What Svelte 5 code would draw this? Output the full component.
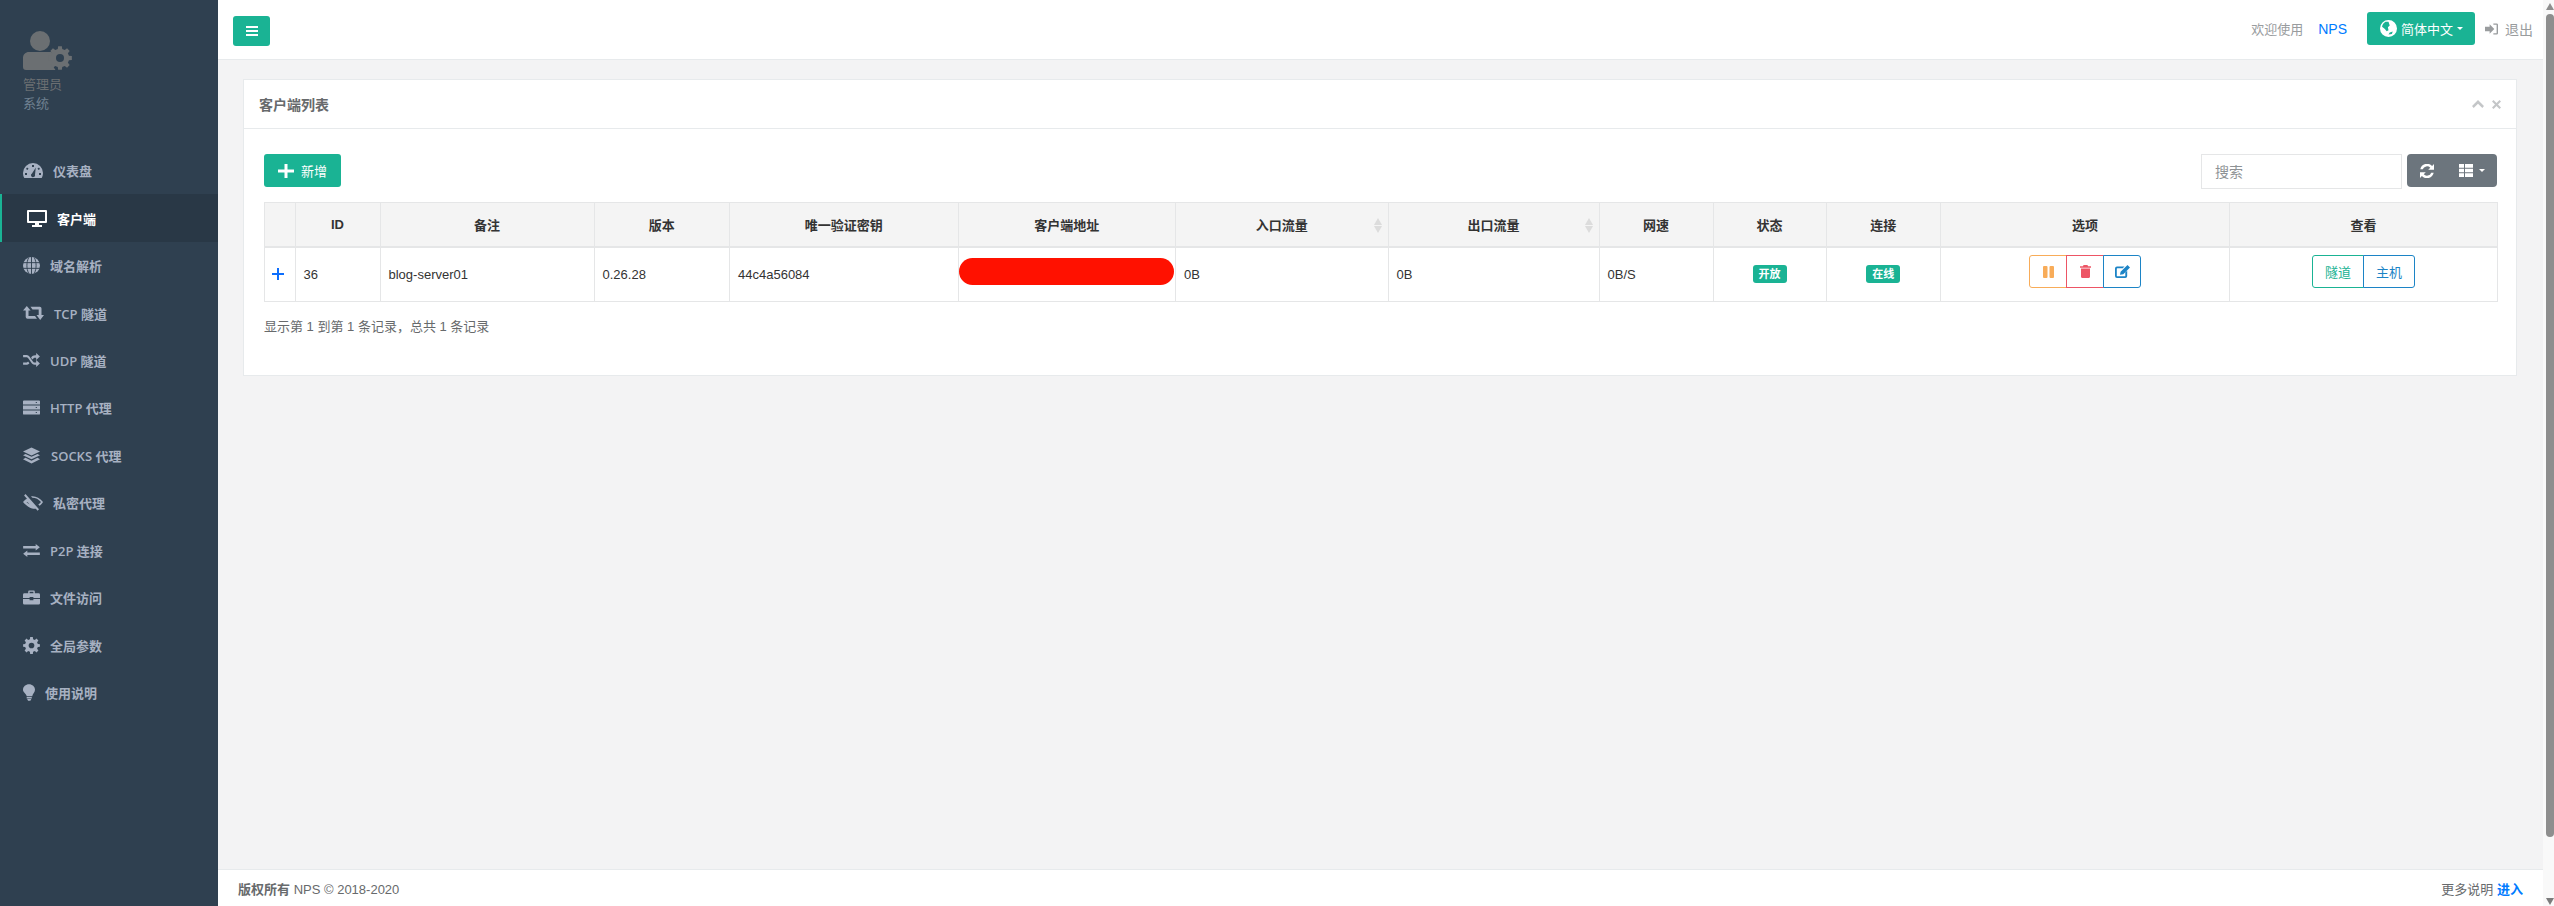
<script>
  const menu = [
    { label: '仪表盘', icon: 'dash' },
    { label: '客户端', icon: 'desk', active: true },
    { label: '域名解析', icon: 'globe' },
    { label: 'TCP 隧道', icon: 'retweet' },
    { label: 'UDP 隧道', icon: 'random' },
    { label: 'HTTP 代理', icon: 'server' },
    { label: 'SOCKS 代理', icon: 'layers', wide: true },
    { label: '私密代理', icon: 'eye' },
    { label: 'P2P 连接', icon: 'exchange' },
    { label: '文件访问', icon: 'case' },
    { label: '全局参数', icon: 'cog' },
    { label: '使用说明', icon: 'bulb' }
  ];

  function gearPath(teeth, outer, root) {
    const c = 12;
    const step = (Math.PI * 2) / teeth;
    const pts = [];
    for (let i = 0; i < teeth; i++) {
      const a = i * step - Math.PI / 2;
      const o = step * 0.2;
      const b = step * 0.31;
      for (const [ang, r] of [[a - b, root], [a - o, outer], [a + o, outer], [a + b, root]]) {
        pts.push((c + Math.cos(ang) * r).toFixed(2) + ' ' + (c + Math.sin(ang) * r).toFixed(2));
      }
    }
    return 'M' + pts.join('L') + 'z';
  }
  const gear = gearPath(8, 12, 9.2);
</script>

{#snippet icon(name)}
  {#if name === 'dash'}
    <svg class="ico i-dash" viewBox="0 0 20 15"><path fill-rule="evenodd" d="M10 0a10 10 0 0 1 10 10c0 1.800-.4 3.500-1.300 5H1.300A10 10 0 0 1 0 10 10 10 0 0 1 10 0zM9 2v2h2V2zM4 4.500 3 6l1.500 1 1-1.500zm12 0-1.500 1 1 1.500L17 6zM2 10v2h2v-2zm14 0v2h2v-2zM12.800 4.500 9 10.500a2 2 0 1 0 3 1.300z"/></svg>
  {:else if name === 'desk'}
    <svg class="ico i-desk" viewBox="0 0 20 17"><path fill-rule="evenodd" d="M1 0h18a1 1 0 0 1 1 1v11a1 1 0 0 1-1 1h-7v2h3v2H5v-2h3v-2H1a1 1 0 0 1-1-1V1a1 1 0 0 1 1-1zm1 2v9h16V2z"/></svg>
  {:else if name === 'globe'}
    <svg class="ico i-globe" viewBox="0 0 18 18"><circle cx="9" cy="9" r="9"/><path d="M0 6h18M0 12h18M9 0v18M6 .5C3.500 6 3.500 12 6 17.500M12 .5c2.500 5.500 2.500 11.500 0 17" stroke="#2f4050" stroke-width="1" fill="none"/></svg>
  {:else if name === 'retweet'}
    <svg class="ico i-ret" viewBox="0 0 21 14"><path d="M3.800 0 7.600 4.500H5.500V10H12l2 2.700H4.500A1.800 1.800 0 0 1 2.700 11V4.500H0zM7.500.8h9.300A1.800 1.800 0 0 1 18.500 2.600V9H21l-3.800 5-3.700-5h2.200V3.500H9.500z"/></svg>
  {:else if name === 'random'}
    <svg class="ico i-rand" viewBox="0 0 18 15"><path d="M0 2.200h3.500c2 0 3 1 4 2.500l3 4.300c.7 1 1.200 1.200 2.300 1.200H14V7.500l4 3.700-4 3.800v-2.500h-1.500c-2 0-3-1-4-2.500l-3-4.300c-.7-1-1.200-1.200-2.300-1.200H0zM14 0l4 3.700-4 3.800V5h-1c-1.400 0-2 .6-3 2L8.500 5C9.800 3.200 11 2.500 13 2.500h1zM0 10.200h3c1.100 0 1.700-.4 2.300-1.200l1.500 1.900c-1 1.200-2.100 1.800-3.800 1.800H0z"/></svg>
  {:else if name === 'server'}
    <svg class="ico i-serv" viewBox="0 0 18 15"><path fill-rule="evenodd" d="M1 0h16a1 1 0 0 1 1 1v3.300H0V1a1 1 0 0 1 1-1zm12.500 1.600v1.200h1.200V1.600zM0 5.400h18v4.200H0zm13.500 1.500v1.200h1.200V6.900zM0 10.700h18V14a1 1 0 0 1-1 1H1a1 1 0 0 1-1-1zm13.500 1.500v1.200h1.200v-1.200z"/></svg>
  {:else if name === 'layers'}
    <svg class="ico i-lay" viewBox="0 0 18 17"><path d="M9 0l9 4.200-9 4.300L0 4.200zM2.700 6.800 9 9.800l6.300-3L18 8.200l-9 4.300-9-4.300zM2.700 11 9 14l6.300-3 2.700 1.400-9 4.600-9-4.600z"/></svg>
  {:else if name === 'eye'}
    <svg class="ico i-eye" viewBox="0 0 20 17"><path d="M2.500 0l13.500 15.300-1.400 1.500L1.100 1.500zM4.800 4.300 14 14.600c-4 1-9-.8-14-6.600 1.300-1.600 2.900-2.800 4.800-3.700zM3.400 8c1 1 2 1.800 3.200 2.400L4.700 8.300zM8 2.500c4.500-.7 8.500 1.500 12 5.500-.7 1.200-2 2.700-3.500 3.800l-1.200-1.400c1.200-.7 2.100-1.600 2.700-2.400-2.500-2.700-5.200-4.200-8.600-4.200z"/></svg>
  {:else if name === 'exchange'}
    <svg class="ico i-exc" viewBox="0 0 18 14"><path d="M13.500 0 18 3.500 13.500 7V4.900H0V2.100h13.500zM4.500 7v2.100H18v2.800H4.500V14L0 10.500z"/></svg>
  {:else if name === 'case'}
    <svg class="ico i-case" viewBox="0 0 18 15"><path fill-rule="evenodd" d="M5.500 3V1.300C5.500.6 6 0 6.800 0h4.400c.8 0 1.300.6 1.300 1.300V3h4A1.500 1.500 0 0 1 18 4.500V8h-7V7H7v1H0V4.500A1.500 1.500 0 0 1 1.500 3zM7 1.500V3h4V1.500zM0 9h7v1.500h4V9h7v4.500a1.500 1.500 0 0 1-1.500 1.500h-15A1.500 1.500 0 0 1 0 13.500z"/></svg>
  {:else if name === 'cog'}
    <svg class="ico i-cog" viewBox="0 0 24 24"><path d={gear}/><circle cx="12" cy="12" r="4" fill="#2f4050"/></svg>
  {:else if name === 'bulb'}
    <svg class="ico i-bulb" viewBox="0 0 13 18"><path d="M6.500 0C10 0 13 2.600 13 6c0 3-2.500 4.300-3 7H4C3.500 10.300 0 9 0 6 0 2.600 3 0 6.500 0zM4 14h5.500v1.500H4zM4.500 16h4.500l-1 2H5.500z"/></svg>
  {/if}
{/snippet}

<div class="page">
  <nav class="side">
    <div class="profile">
      <svg class="avatar" viewBox="0 0 49 39">
        <circle cx="17" cy="10" r="10"/>
        <path d="M6 21h20c2.500 0 4.500.6 6 2-3.800 5-3.500 11 .5 16H3a3 3 0 0 1-3-3v-9c0-3.500 2.500-6 6-6z"/>
        <g transform="translate(25 15)"><path d={gear}/><circle cx="12" cy="12" r="4" fill="#2f4050"/></g>
      </svg>
      <div class="role">管理员</div>
      <div class="sys">系统</div>
    </div>
    <ul>
      {#each menu as m}
        <li class:active={m.active} class:wide={m.wide}>
          {@render icon(m.icon)}
          <span>{m.label}</span>
        </li>
      {/each}
    </ul>
  </nav>

  <div class="main">
    <header class="top">
      <button class="btn green burger" aria-label="菜单">
        <svg viewBox="0 0 12 10" width="12" height="10"><path d="M0 0h12v2H0zM0 4h12v2H0zM0 8h12v2H0z" fill="#fff"/></svg>
      </button>
      <div class="top-right">
        <span class="welcome">欢迎使用</span>
        <a class="nps" href="#nps">NPS</a>
        <button class="btn green lang">
          <svg viewBox="0 0 14 14" width="17" height="17"><path fill-rule="evenodd" fill="#fff" d="M7 0a7 7 0 1 1 0 14A7 7 0 0 1 7 0zM4.500 1.500C3 2.300 2 3.800 1.700 5.500L4 7.500l1.500 1.800L7 8.500l-.5-2.500L8 4.500 7 1.500zM10.500 9.500l-2.500.8-1 1.700 2.800-.5z"/></svg>
          <span>简体中文</span><i class="caret"></i>
        </button>
        <span class="logout">
          <svg viewBox="0 0 14 12" width="13" height="12"><path d="M0 3.500h5V1l5 5-5 5V8.500H0zM9 0h3.500A1.500 1.500 0 0 1 14 1.500v9a1.500 1.500 0 0 1-1.500 1.500H9v-1.500h3.500v-9H9z" fill="#999c9e"/></svg>
          退出
        </span>
      </div>
    </header>

    <main class="content">
      <section class="card">
        <div class="card-head">
          <h5>客户端列表</h5>
          <div class="tools">
            <svg viewBox="0 0 12 8" width="12" height="8"><path d="M6 0 12 6 10.300 8 6 3.700 1.700 8 0 6z" fill="#c4c6c8"/></svg>
            <svg viewBox="0 0 9 9" width="9" height="9"><path d="M1.500 0 4.500 3 7.500 0 9 1.500 6 4.500 9 7.500 7.500 9 4.500 6 1.500 9 0 7.500 3 4.500 0 1.500z" fill="#c4c6c8"/></svg>
          </div>
        </div>
        <div class="card-body">
          <div class="toolbar">
            <button class="btn green add">
              <svg viewBox="0 0 16 14" width="16" height="14"><path d="M6.500 0h3v5.500H16v3H9.500V14h-3V8.500H0v-3h6.500z" fill="#fff"/></svg>
              新增
            </button>
            <div class="search-wrap">
              <input class="search" placeholder="搜索" />
              <div class="tool-group">
                <svg viewBox="0 0 14 14" width="14" height="14"><path d="M14 0v5.800H8.200l2.100-2.100A4.500 4.500 0 0 0 2.800 5.300H.3a7 7 0 0 1 11.800-3.400zM0 14V8.200h5.800l-2.100 2.100a4.500 4.500 0 0 0 7.500-1.600h2.500a7 7 0 0 1-11.800 3.400z" fill="#fff"/></svg>
                <span class="cols">
                  <svg viewBox="0 0 14 13" width="14" height="13"><path fill="#fff" d="M0 0h5v3.800H0zM6 0h8v3.800H6zM0 4.700h5v3.600H0zM6 4.700h8v3.600H6zM0 9.200h5V13H0zM6 9.200h8V13H6z"/></svg>
                  <i class="caret"></i>
                </span>
              </div>
            </div>
          </div>

          <table>
            <thead>
              <tr>
                <th></th><th>ID</th><th>备注</th><th>版本</th><th>唯一验证密钥</th><th>客户端地址</th>
                <th class="sort">入口流量</th><th class="sort">出口流量</th>
                <th>网速</th><th>状态</th><th>连接</th><th>选项</th><th>查看</th>
              </tr>
            </thead>
            <tbody>
              <tr>
                <td class="expand"><svg viewBox="0 0 12 12" width="12" height="12"><path d="M5 0h2v5h5v2H7v5H5V7H0V5h5z" fill="#0d6efd"/></svg></td>
                <td>36</td>
                <td>blog-server01</td>
                <td>0.26.28</td>
                <td>44c4a56084</td>
                <td class="addr"><div class="mask"></div></td>
                <td>0B</td>
                <td>0B</td>
                <td>0B/S</td>
                <td class="center"><span class="badge">开放</span></td>
                <td class="center"><span class="badge">在线</span></td>
                <td class="center">
                  <div class="bgroup">
                    <button class="o-warn" aria-label="暂停"><svg viewBox="0 0 11 12" width="11" height="12"><rect x="0" y="0" width="4.500" height="12" rx="1" fill="#f8ac59"/><rect x="6.500" y="0" width="4.500" height="12" rx="1" fill="#f8ac59"/></svg></button>
                    <button class="o-danger" aria-label="删除"><svg viewBox="0 0 11 13" width="11" height="13"><path d="M3.500 0h4l.5 1.200h3v1.600H0V1.200h3zM1 3.500h9v8.300c0 .7-.5 1.200-1.200 1.200H2.200C1.500 13 1 12.500 1 11.800z" fill="#ed5565"/></svg></button>
                    <button class="o-blue" aria-label="编辑"><svg viewBox="0 0 15 13" width="15" height="13"><path d="M2 1.500h7.500L7.700 3.300H2.300a.5.500 0 0 0-.5.500v7a.5.500 0 0 0 .5.500h7.500a.5.500 0 0 0 .5-.5V7.500L12.200 5.700V11a2 2 0 0 1-2 2H2a2 2 0 0 1-2-2V3.500a2 2 0 0 1 2-2zM12.500 0 15 2.500 8.300 9.200l-3.300.6.600-3.100z" fill="#1c84c6"/></svg></button>
                  </div>
                </td>
                <td class="center">
                  <div class="bgroup text">
                    <button class="o-green">隧道</button>
                    <button class="o-blue">主机</button>
                  </div>
                </td>
              </tr>
            </tbody>
          </table>
          <p class="summary">显示第 1 到第 1 条记录，总共 1 条记录</p>
        </div>
      </section>
    </main>

    <footer class="foot">
      <div><strong>版权所有</strong> NPS © 2018-2020</div>
      <div>更多说明 <a href="#more">进入</a></div>
    </footer>
  </div>

  <div class="scrollbar" aria-hidden="true">
    <i class="up"></i>
    <div class="thumb"></div>
    <i class="down"></i>
  </div>
</div>

<style>
  :global(body) {
    margin: 0;
    font-family: "Liberation Sans", "Noto Sans CJK SC", sans-serif;
    font-size: 13px;
    color: #676a6c;
  }
  .page {
    display: flex;
    width: 2554px;
    height: 906px;
    overflow: hidden;
    background: #f3f3f4;
  }
  .side {
    width: 218px;
    flex: none;
    background: #2f4050;
    color: #a7b1c2;
    font-family: "Open Sans", "Noto Sans CJK SC", sans-serif;
    font-size: 13px;
    font-weight: 600;
  }
  .profile {
    height: 147px;
    box-sizing: border-box;
    padding: 31px 0 0 23px;
  }
  .avatar {
    display: block;
    width: 49px;
    height: 39px;
    fill: #6b6f72;
  }
  .role { color: #6b6f72; font-size: 13px; font-weight: 400; line-height: 19px; margin-top: 5px; }
  .sys { color: #708090; font-size: 13px; font-weight: 400; line-height: 19px; }
  ul { list-style: none; margin: 0; padding: 0; }
  li {
    height: 47.450px;
    box-sizing: border-box;
    display: flex;
    align-items: center;
    padding-left: 23px;
    gap: 10px;
  }
  li.wide { gap: 11px; }
  li.active {
    background: #293846;
    border-left: 2px solid #1ab394;
    color: #fff;
    padding-left: 25px;
  }
  .ico { fill: #a7b1c2; display: block; flex: none; }
  li.active .ico { fill: #fff; }
  .i-dash { width: 20px; height: 15px; }
  .i-desk { width: 20px; height: 17px; }
  .i-globe { width: 17px; height: 17px; }
  .i-ret { width: 21px; height: 14px; }
  .i-rand { width: 17px; height: 14px; }
  .i-serv { width: 17px; height: 15px; }
  .i-lay { width: 17px; height: 17px; }
  .i-eye { width: 20px; height: 17px; }
  .i-exc { width: 17px; height: 13px; }
  .i-case { width: 17px; height: 15px; }
  .i-cog { width: 17px; height: 17px; }
  .i-bulb { width: 12px; height: 17px; }

  .main {
    width: 2325px;
    flex: none;
    display: flex;
    flex-direction: column;
    height: 906px;
  }
  .top {
    height: 60px;
    box-sizing: border-box;
    flex: none;
    background: #fff;
    border-bottom: 1px solid #e7eaec;
    display: flex;
    align-items: flex-start;
    justify-content: space-between;
    padding: 16px 10px 0 15px;
  }
  .btn {
    border: 0;
    border-radius: 3px;
    font: inherit;
    color: #fff;
    padding: 0;
    display: inline-flex;
    align-items: center;
    justify-content: center;
  }
  .green { background: #1ab394; }
  .burger { width: 37px; height: 30px; }
  .top-right {
    display: flex;
    align-items: center;
    margin-top: -4px;
    height: 33px;
    font-size: 13px;
    color: #999c9e;
  }
  .welcome { margin-right: 15px; }
  .nps { color: #007bff; text-decoration: none; font-size: 14px; margin-right: 20px; }
  .lang { width: 108px; height: 33px; gap: 4px; font-size: 13px; justify-content: flex-start; padding-left: 13px; box-sizing: border-box; }
  .caret {
    display: inline-block;
    border-top: 3px solid #fff;
    border-left: 3px solid transparent;
    border-right: 3px solid transparent;
  }
  .logout {
    display: inline-flex;
    align-items: center;
    gap: 7px;
    margin-left: 10px;
    font-size: 14px;
    color: #999c9e;
  }

  .content {
    flex: 1;
    padding: 19px 26px 0 25px;
  }
  .card {
    background: #fff;
    border: 1px solid #e7eaec;
    height: 297px;
    box-sizing: border-box;
  }
  .card-head {
    height: 49px;
    box-sizing: border-box;
    border-bottom: 1px solid #e7eaec;
    display: flex;
    justify-content: space-between;
    align-items: center;
    padding: 0 15px;
  }
  h5 { margin: 0; font-size: 14px; font-weight: 600; color: #676a6c; }
  .tools { display: flex; align-items: center; gap: 8px; }
  .card-body { padding: 25px 19px 0 20px; }
  .toolbar {
    display: flex;
    justify-content: space-between;
    align-items: flex-start;
  }
  .add { width: 77px; height: 33px; gap: 7px; font-size: 13px; }
  .search-wrap { display: flex; gap: 5px; }
  .search {
    width: 199px;
    height: 33px;
    box-sizing: content-box;
    border: 1px solid #e5e6e7;
    padding: 0 0 0 13px;
    width: 186px;
    font: 14px "Liberation Sans", "Noto Sans CJK SC", sans-serif;
    outline: none;
    color: #333;
  }
  .search::placeholder { color: #8e9295; }
  .tool-group {
    width: 90px;
    height: 33px;
    background: #6c757d;
    border-radius: 4px;
    display: flex;
    align-items: center;
    padding-left: 13px;
    box-sizing: border-box;
    gap: 25px;
  }
  .cols { display: inline-flex; align-items: center; gap: 6px; }

  table {
    border-collapse: collapse;
    table-layout: fixed;
    width: 2233px;
    margin-top: 13px;
    font-size: 13px;
    color: #333;
  }
  th, td { border: 1px solid #e5e6e7; padding: 0; box-sizing: border-box; }
  thead tr { height: 44px; }
  tbody tr { height: 55px; }
  th {
    background: #f4f4f4;
    color: #333;
    font-weight: 700;
    text-align: center;
    border-bottom-width: 2px;
    position: relative;
    font-size: 13px;
  }
  td { padding-left: 8px; color: #333; }
  th:nth-child(1) { width: 30.500px; }
  th:nth-child(2) { width: 85px; }
  th:nth-child(3) { width: 214px; }
  th:nth-child(4) { width: 135.500px; }
  th:nth-child(5) { width: 228.500px; }
  th:nth-child(6) { width: 217.500px; }
  th:nth-child(7) { width: 212.500px; }
  th:nth-child(8) { width: 211px; }
  th:nth-child(9) { width: 114px; }
  th:nth-child(10) { width: 113px; }
  th:nth-child(11) { width: 114.500px; }
  th:nth-child(12) { width: 289px; }
  th:nth-child(13) { width: 268px; }
  .sort::after {
    content: "";
    position: absolute;
    right: 6px;
    top: 15px;
    width: 0;
    border-left: 4px solid transparent;
    border-right: 4px solid transparent;
    border-bottom: 7px solid #dcdcdc;
  }
  .sort::before {
    content: "";
    position: absolute;
    right: 6px;
    top: 23px;
    width: 0;
    border-left: 4px solid transparent;
    border-right: 4px solid transparent;
    border-top: 7px solid #dcdcdc;
  }
  td.expand { padding: 0 0 0 7px; }
  td.expand svg { display: block; }
  td.addr { padding: 0; }
  .mask {
    height: 27px;
    margin-right: 1px;
    background: #ff1100;
    border-radius: 14px;
    margin-bottom: 6px;
  }
  td.center { padding: 0; text-align: center; }
  .badge {
    display: inline-block;
    background: #1ab394;
    color: #fff;
    font-size: 11px;
    font-weight: 700;
    line-height: 18px;
    height: 18px;
    padding: 0 6px;
    border-radius: 3px;
    vertical-align: middle;
  }
  .bgroup { display: inline-flex; vertical-align: middle; margin-bottom: 5px; }
  .bgroup button {
    height: 33px;
    width: 38px;
    box-sizing: border-box;
    background: #fff;
    border: 1px solid;
    padding: 0;
    margin-left: -1px;
    display: flex;
    align-items: center;
    justify-content: center;
    font: inherit;
  }
  .bgroup button:first-child { border-radius: 3px 0 0 3px; margin-left: 0; }
  .bgroup button:last-child { border-radius: 0 3px 3px 0; }
  .bgroup.text button { width: 52px; }
  .o-warn { border-color: #f8ac59 !important; }
  .o-danger { border-color: #ed5565 !important; position: relative; }
  .o-blue { border-color: #1c84c6 !important; color: #1c84c6; position: relative; }
  .o-green { border-color: #1ab394 !important; color: #1ab394; }
  .summary { margin: 14px 0 0; font-size: 13px; color: #676a6c; }

  .foot {
    height: 37px;
    box-sizing: border-box;
    flex: none;
    background: #fff;
    border-top: 1px solid #e7eaec;
    display: flex;
    justify-content: space-between;
    align-items: center;
    padding: 0 20px;
    font-size: 13px;
    color: #676a6c;
  }
  .foot strong { font-weight: 700; }
  .foot a { color: #007bff; font-weight: 700; text-decoration: none; }

  .scrollbar {
    position: relative;
    flex: none;
    width: 11px;
    height: 906px;
    background: #f9f9f9;
  }
  .thumb {
    position: absolute;
    left: 3px;
    right: 0;
    top: 14px;
    height: 823px;
    border-radius: 4px;
    background: #8e8e8e;
  }
  .up, .down {
    position: absolute;
    left: 3px;
    border-left: 4px solid transparent;
    border-right: 4px solid transparent;
  }
  .up { top: 3px; border-bottom: 7px solid #8e8e8e; }
  .down { bottom: 1px; border-top: 7px solid #7c7c7c; }
</style>
